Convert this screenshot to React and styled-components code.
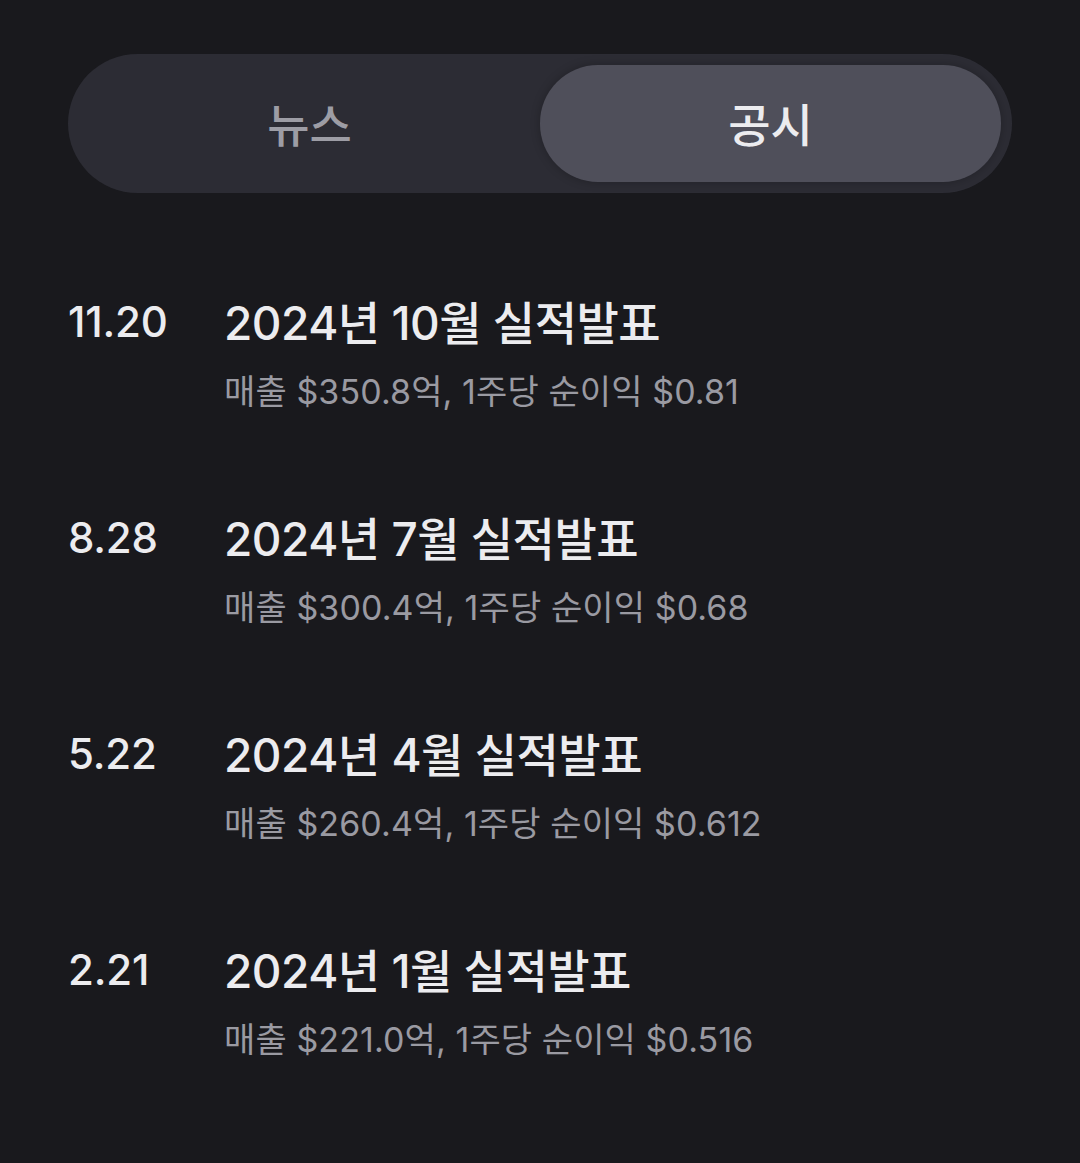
import React, { useState } from 'react'
import styled, { createGlobalStyle } from 'styled-components'

const GlobalStyle = createGlobalStyle`
  html, body {
    margin: 0;
    padding: 0;
    background: #19191d;
  }
  body {
    font-family: Inter, "Noto Sans CJK KR", sans-serif;
    -webkit-font-smoothing: antialiased;
  }
`

const Page = styled.div`
  min-height: 100vh;
  background: #19191d;
  padding: 54px 68px 0;
  box-sizing: border-box;
`

// 상단 탭
const Tabs = styled.div`
  display: grid;
  grid-template-columns: 1fr 1fr;
  height: 139px;
  padding: 11px;
  box-sizing: border-box;
  border-radius: 70px;
  background: #2c2c34;
`

const Tab = styled.button`
  border: 0;
  padding: 0 0 4px;
  border-radius: 58px;
  background: ${p => (p.$active ? '#4f4f5a' : 'transparent')};
  box-shadow: ${p => (p.$active ? '0 0 10px rgba(0,0,0,0.25)' : 'none')};
  color: ${p => (p.$active ? '#ececef' : '#9d9da5')};
  font-family: inherit;
  font-size: 46px;
  font-weight: 500;
  cursor: pointer;
`

const List = styled.ul`
  list-style: none;
  margin: 0;
  padding: 0;
  margin-top: 102px;
`

const Row = styled.li`
  display: grid;
  grid-template-columns: 156px 1fr;
  height: 216px;
`

const Date = styled.div`
  color: #ececef;
  font-size: 42px;
  font-weight: 500;
  line-height: 54px;
  letter-spacing: -0.2px;
`

const Title = styled.div`
  color: #ececef;
  font-size: 46px;
  font-weight: 500;
  line-height: 56px;
  letter-spacing: -0.5px;
`

const Desc = styled.div`
  margin-top: 19px;
  color: #9a9aa2;
  font-size: 34px;
  line-height: 44px;
  letter-spacing: 0.1px;
`

const items = [
  { date: '11.20', title: '2024년 10월 실적발표', desc: '매출 $350.8억, 1주당 순이익 $0.81' },
  { date: '8.28', title: '2024년 7월 실적발표', desc: '매출 $300.4억, 1주당 순이익 $0.68' },
  { date: '5.22', title: '2024년 4월 실적발표', desc: '매출 $260.4억, 1주당 순이익 $0.612' },
  { date: '2.21', title: '2024년 1월 실적발표', desc: '매출 $221.0억, 1주당 순이익 $0.516' },
]

export default function App() {
  const [tab, setTab] = useState('공시')
  return (
    <Page>
      <GlobalStyle />
      <Tabs>
        {['뉴스', '공시'].map(t => (
          <Tab key={t} $active={tab === t} onClick={() => setTab(t)}>{t}</Tab>
        ))}
      </Tabs>
      <List>
        {items.map(it => (
          <Row key={it.date}>
            <Date>{it.date}</Date>
            <div>
              <Title>{it.title}</Title>
              <Desc>{it.desc}</Desc>
            </div>
          </Row>
        ))}
      </List>
    </Page>
  )
}
